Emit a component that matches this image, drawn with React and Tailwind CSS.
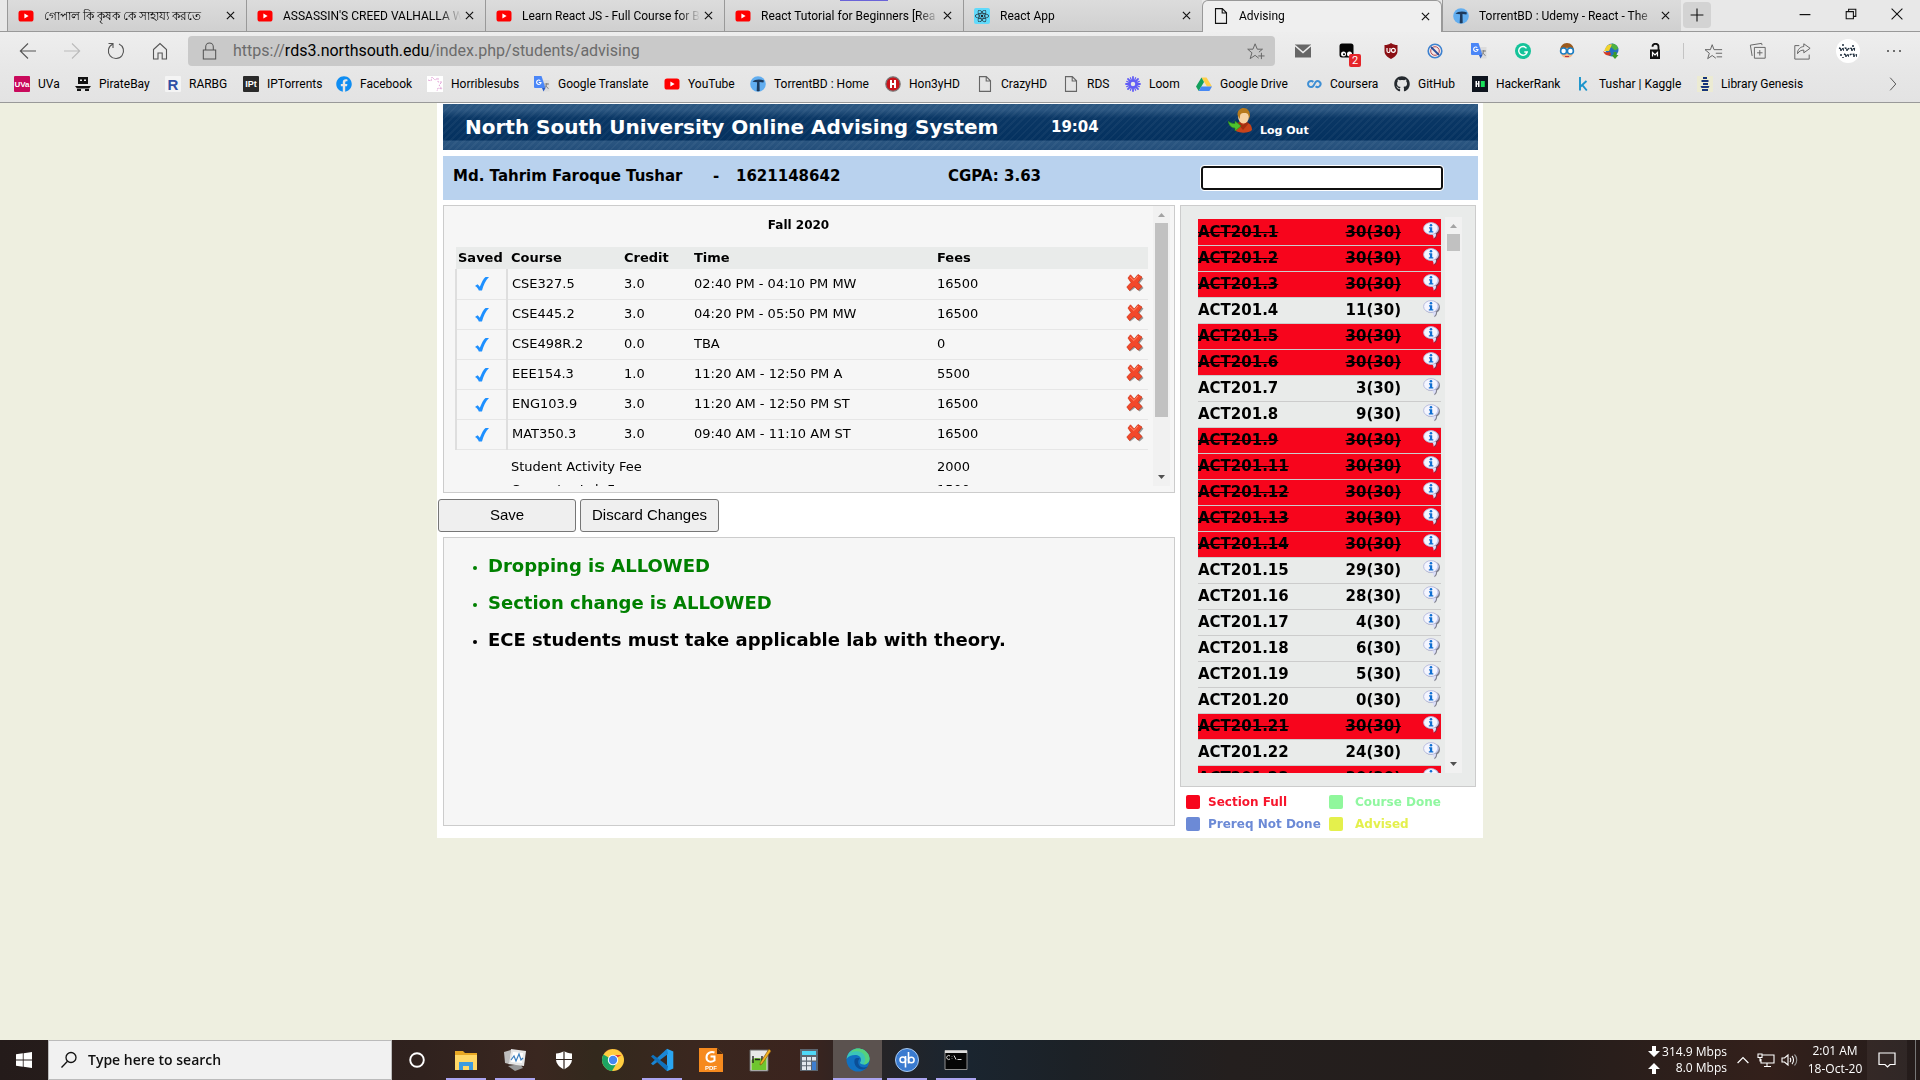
import React from "react";
import { FaGithub, FaReact, FaFacebook } from "react-icons/fa";

/* ---------- small site icons ---------- */

const YouTube = () => (
  <svg viewBox="0 0 16 16" className="size-4">
    <rect x="0.5" y="2.5" width="15" height="11" rx="2.6" fill="#f00" />
    <path d="M6.4 5.6 10.6 8l-4.2 2.4z" fill="#fff" />
  </svg>
);

const ReactIcon = () => (
  <span className="grid size-4 place-items-center rounded-[2px] bg-[#61dafb] text-[#20232a]">
    <FaReact className="size-3.5" />
  </span>
);

const PageIcon = ({ dark }) => (
  <svg viewBox="0 0 16 16" className="size-4" fill="none" stroke={dark ? "#111" : "#666"} strokeWidth="1.1">
    <path d="M2.5.6h6.8l4.2 4.2v10.6h-11z M9.2.8v4.2h4.2" />
  </svg>
);

const Torrent = () => (
  <svg viewBox="0 0 16 16" className="size-4">
    <circle cx="8" cy="8" r="7.8" fill="#62aef0" />
    <path d="M2.5 5.8C4.500 3.300 10.500 3 14 4.600l-.6 1.800-3.900-.3.2 8.800c-1.500.4-2 .2-3 0l.4-8.600z" fill="#1d3a5c" />
  </svg>
);

const Square = ({ bg, color, children, size = 8 }) => (
  <svg viewBox="0 0 16 16" className="size-4">
    <rect width="16" height="16" rx="1" fill={bg} />
    <text x="8" y={size > 12 ? 13.5 : 11} fontSize={size} fontWeight="700" fill={color} textAnchor="middle" fontFamily="Liberation Sans, sans-serif">
      {children}
    </text>
  </svg>
);

const Ship = () => (
  <svg viewBox="0 0 16 16" className="size-4">
    <path d="M3 1h10v7H3zM0 10h16l-2 2.500H2zM2 13h4v2H2zM10 13h4v2h-4z" fill="#111" />
    <path d="M5 3.500h2v1.500H5zM9 3.500h2v1.500H9zM3 9h10v.8H3z" fill="#eee" />
  </svg>
);

const Horrible = () => (
  <svg viewBox="0 0 16 16" className="size-4">
    <rect width="16" height="16" fill="#fff" />
    <path d="M1 4l3 1 1-4 3 3 3-2 0 4 4 0-3 3 3 4-4-1-1 3" fill="none" stroke="#e3a6d8" strokeWidth="1" strokeDasharray="2 1" />
  </svg>
);

const Translate = () => (
  <svg viewBox="0 0 16 16" className="size-4">
    <path d="M6 4h9.500v11.500H9z" fill="#dcdcdc" />
    <path d="M0 0h7.500l4 12H1a1 1 0 0 1-1-1z" fill="#4a86f7" />
    <path d="M8 12h3.500L9.500 15.500z" fill="#2a5dc8" />
    <path d="M6.300 4.600A2.200 2.200 0 1 0 7 6.500H4.800" fill="none" stroke="#fff" strokeWidth="1.100" />
    <path d="M10.500 8h4.500M12.800 7v1c-.3 2-1.300 3-2.300 4M11.500 9.500c.6 1.200 1.600 2.200 3 3" fill="none" stroke="#777" strokeWidth=".9" />
  </svg>
);

const Hon3y = () => (
  <svg viewBox="0 0 16 16" className="size-4">
    <circle cx="8" cy="8" r="7.200" fill="#c8141b" stroke="#777" strokeWidth="1.200" />
    <path d="M5 4h2v3h2V4h2v8H9V9H7v3H5z" fill="#fff" />
  </svg>
);

const Loom = () => (
  <svg viewBox="0 0 16 16" className="size-4" stroke="#625df5" strokeWidth="1.800" strokeLinecap="round" fill="none">
    <path d="M8 1v3.500M8 11.500V15M1 8h3.500M11.500 8H15M3 3l2.600 2.600M10.400 10.400 13 13M13 3l-2.600 2.600M5.600 10.400 3 13" />
    <circle cx="8" cy="8" r="3.400" strokeWidth="2.200" />
    <path d="M5.400 1.700l1.200 3M9.400 11.300l1.200 3M10.600 1.700l-1.200 3M6.600 11.300l-1.200 3M1.700 5.400l3 1.200M11.300 9.400l3 1.200M1.700 10.600l3-1.200M11.300 6.600l3-1.200" strokeWidth="1.200" />
  </svg>
);

const Drive = () => (
  <svg viewBox="0 0 16 16" className="size-4">
    <path d="M5.500 1.500h5L16 10.500h-5z" fill="#ffcf48" />
    <path d="M5.500 1.500 8 6 2.700 15 0 10.500z" fill="#12a05c" />
    <path d="M5.300 10.500H16L13.400 15H2.700z" fill="#4688f4" />
  </svg>
);

const Coursera = () => (
  <svg viewBox="0 0 16 16" className="size-4" fill="none" stroke="#3f8fd4" strokeWidth="2">
    <path d="M7.300 6A3 3 0 1 0 7.300 10C8.500 8.500 8.500 7.500 9.600 6a2.900 2.900 0 1 1 0 4.200" />
  </svg>
);

const LibGen = () => (
  <svg viewBox="0 0 16 16" className="size-4">
    <rect width="16" height="16" fill="#ecebd3" />
    <path d="M6 1h4v2H6zM4.500 4h7v2h-7zM6 7h5v2H6zM3.500 10h9l-1 2h-7zM5 13h6v2H5z" fill="#17357c" />
  </svg>
);

/* ---------- browser data ---------- */

const tabs = [
  { icon: <YouTube />, title: "গোপাল কি কৃষক কে সাহায্য করতে" },
  { icon: <YouTube />, title: "ASSASSIN'S CREED VALHALLA W" },
  { icon: <YouTube />, title: "Learn React JS - Full Course for B" },
  { icon: <YouTube />, title: "React Tutorial for Beginners [Rea" },
  { icon: <ReactIcon />, title: "React App" },
  { icon: <PageIcon dark />, title: "Advising", active: true },
  { icon: <Torrent />, title: "TorrentBD : Udemy - React - The" },
];

const bookmarks = [
  { label: "UVa", w: "w-[61px]", icon: <Square bg="#c90a5c" color="#fff" size={8}>UVa</Square> },
  { label: "PirateBay", w: "w-[90px]", icon: <Ship /> },
  { label: "RARBG", w: "w-[78px]", icon: <Square bg="#f4f4f4" color="#2f4fa5" size={15}>R</Square> },
  { label: "IPTorrents", w: "w-[93px]", icon: <Square bg="#2a2a2a" color="#fff" size={9}>IPt</Square> },
  { label: "Facebook", w: "w-[91px]", icon: <FaFacebook className="size-4 text-[#0f8df2]" /> },
  { label: "Horriblesubs", w: "w-[107px]", icon: <Horrible /> },
  { label: "Google Translate", w: "w-[130px]", icon: <Translate /> },
  { label: "YouTube", w: "w-[86px]", icon: <YouTube /> },
  { label: "TorrentBD : Home", w: "w-[135px]", icon: <Torrent /> },
  { label: "Hon3yHD", w: "w-[92px]", icon: <Hon3y /> },
  { label: "CrazyHD", w: "w-[86px]", icon: <PageIcon /> },
  { label: "RDS", w: "w-[62px]", icon: <PageIcon /> },
  { label: "Loom", w: "w-[71px]", icon: <Loom /> },
  { label: "Google Drive", w: "w-[110px]", icon: <Drive /> },
  { label: "Coursera", w: "w-[88px]", icon: <Coursera /> },
  { label: "GitHub", w: "w-[78px]", icon: <FaGithub className="size-4 text-[#24292e]" /> },
  {
    label: "HackerRank",
    w: "w-[103px]",
    icon: (
      <svg viewBox="0 0 16 16" className="size-4">
        <rect width="16" height="16" fill="#0e141e" />
        <path d="M3.500 5h1.500v2.200h1V5h1.500v6H6V8.600H5V11H3.500z" fill="#fff" />
        <rect x="8.800" y="5" width="4" height="6" fill="#1ae05b" />
      </svg>
    ),
  },
  {
    label: "Tushar | Kaggle",
    w: "w-[122px]",
    icon: (
      <svg viewBox="0 0 16 16" className="size-4" fill="none" stroke="#1a94cc" strokeWidth="1.900">
        <path d="M5 1v13.500M11.500 5 5.500 10.500M7.200 8.800l4.600 5.700" />
      </svg>
    ),
  },
  { label: "Library Genesis", w: "w-[106px]", icon: <LibGen /> },
];

/* ---------- browser chrome ---------- */

function Close({ className }) {
  return (
    <svg viewBox="0 0 10 10" className={className} stroke="#111" strokeWidth="1.300">
      <path d="M1 1l8 8M9 1l-8 8" />
    </svg>
  );
}

function Tab({ icon, title, active }) {
  return (
    <div
      className={
        active
          ? "flex h-8 min-w-0 flex-1 items-center rounded-t-md border border-b-0 border-[#999] bg-[#efefef] pb-px pl-2.5 pr-2"
          : "flex h-8 min-w-0 flex-1 items-center border-b border-l border-b-[#999] border-l-[#999] bg-linear-to-b from-[#dcdcdc] to-[#d0d0d0] pl-2.5 pr-2"
      }
    >
      <button type="button" className="flex h-full min-w-0 flex-1 items-center text-left">
        <span className="shrink-0">{icon}</span>
        <span className="ml-2.5 flex-1 overflow-hidden whitespace-nowrap mask-r-from-88% mask-r-to-100%">{title}</span>
      </button>
      <button type="button" aria-label={`Close ${title}`} className="grid size-4 shrink-0 place-items-center">
        <Close className="size-[9px]" />
      </button>
    </div>
  );
}

const ToolButton = ({ label, w = "w-11", children }) => (
  <button type="button" aria-label={label} className={`relative grid h-8 shrink-0 place-items-center ${w}`}>
    {children}
  </button>
);

const Line = ({ children, color = "#555", className = "size-5" }) => (
  <svg viewBox="0 0 20 20" className={className} fill="none" stroke={color} strokeWidth="1.100">
    {children}
  </svg>
);

function Browser() {
  return (
    <header className="shrink-0 border-b border-[#999] bg-[#e8e8e8] font-['Roboto','Noto_Sans',sans-serif] text-xs text-black">
      <div className="relative flex h-8 border-b border-[#999] pl-[7px]">
        <span className="absolute left-[840px] top-0 h-px w-12 bg-[#6a63d8]" />
        <div className="-mb-px flex min-w-0 max-w-[1674px] flex-1">
          {tabs.map((t) => (
            <Tab key={t.title} {...t} />
          ))}
        </div>
        <button type="button" aria-label="New tab" className="ml-0.5 mt-0.5 grid h-[26px] w-7 place-items-center rounded-sm bg-[#d3d3d3]">
          <Line color="#111" className="size-4"><path d="M10 2v16M2 10h16" strokeWidth="1.400" /></Line>
        </button>
        <div className="ml-auto flex">
          <button type="button" aria-label="Minimize" className="grid h-7 w-[46px] place-items-center">
            <Line color="#111" className="size-3"><path d="M1 11h18" strokeWidth="2" /></Line>
          </button>
          <button type="button" aria-label="Restore" className="grid h-7 w-[46px] place-items-center">
            <Line color="#111" className="size-3"><path d="M2 6h12v12H2zM6 6V2h12v12h-4" strokeWidth="1.800" /></Line>
          </button>
          <button type="button" aria-label="Close window" className="grid h-7 w-[46px] place-items-center">
            <Line color="#111" className="size-3"><path d="M1 1l18 18M19 1 1 19" strokeWidth="1.800" /></Line>
          </button>
        </div>
      </div>

      <div className="flex h-[38px] items-center bg-linear-to-b from-[#eeeeee] to-[#e7e7e7] pl-1.5 pr-1">
        <ToolButton label="Back"><Line color="#555"><path d="M18 10H2M10 2.500 2.300 10l7.700 7.500" /></Line></ToolButton>
        <ToolButton label="Forward"><Line color="#bbb"><path d="M2 10h16M10 2.500l7.700 7.500-7.700 7.500" /></Line></ToolButton>
        <ToolButton label="Reload">
          <Line color="#555"><path d="M6.500 3.200a7.600 7.600 0 1 0 6.500-.2M2.500 2.500h4.500V7" /></Line>
        </ToolButton>
        <ToolButton label="Home">
          <Line color="#555"><path d="M3.500 8.500 10 2.500l6.500 6v9.500h-4.300v-6H8v6H3.500z" /></Line>
        </ToolButton>
        <label className="ml-1.5 mr-1.5 flex h-[30px] min-w-0 flex-1 items-center rounded-sm bg-[#c9c9c9] pl-3 pr-2.5">
          <Line color="#555" className="size-[19px] shrink-0"><path d="M3.500 8.500h13V18h-13zM6 8.500V5a4 4 0 0 1 8 0v3.500" /></Line>
          <span className="ml-3.5 flex-1 text-base text-[#6b6b6b]">
            https://<span className="text-black">rds3.northsouth.edu</span>/index.php/students/advising
          </span>
          <Line color="#666" className="size-[18px]">
            <path d="M13 18 9 14.800 3.500 18.500l2-6.500L.8 8h5.800L9 2l2.400 6h5.800l-4 3.300M16 12v7M12.500 15.500h7" />
          </Line>
        </label>
        <ToolButton label="Mail">
          <svg viewBox="0 0 16 16" className="size-4"><path d="M0 1.500h16v13H0z" fill="#666" /><path d="M0 2.500 8 9.500l8-7" fill="none" stroke="#eee" strokeWidth="1.600" /></svg>
        </ToolButton>
        <ToolButton label="Tampermonkey">
          <svg viewBox="0 0 16 16" className="size-4"><rect x=".5" y=".5" width="14" height="14" rx="2.500" fill="#050505" /><circle cx="4.500" cy="11" r="2.500" fill="#fff" /><circle cx="10.500" cy="11" r="2.500" fill="#fff" /><circle cx="5" cy="11.300" r="1" /></svg>
          <span className="absolute bottom-0 left-6 rounded-xs bg-[#e5252a] px-[3px] text-[11px] leading-[13px] text-white">2</span>
        </ToolButton>
        <ToolButton label="uBlock Origin">
          <svg viewBox="0 0 16 16" className="size-4"><path d="M8 0c2 1.500 4 2 6.500 2v6c0 4-3 6-6.500 8-3.500-2-6.500-4-6.500-8V2C4 2 6 1.500 8 0z" fill="#8b0f14" /><path d="M4 5v3a1.500 1.500 0 0 0 3 0V5" fill="none" stroke="#fff" strokeWidth="1.200" /><circle cx="10.300" cy="7.300" r="2" fill="none" stroke="#fff" strokeWidth="1.200" /></svg>
        </ToolButton>
        <ToolButton label="Blocker">
          <svg viewBox="0 0 16 16" className="size-4"><circle cx="8" cy="8" r="6.800" fill="#f6e9e7" stroke="#3d82d0" strokeWidth="1.600" /><circle cx="8" cy="8" r="4.300" fill="none" stroke="#b24c54" strokeWidth="1" /><path d="M4 4l8 8" stroke="#274c9b" strokeWidth="1.800" /></svg>
        </ToolButton>
        <ToolButton label="Google Translate"><Translate /></ToolButton>
        <ToolButton label="Grammarly">
          <svg viewBox="0 0 16 16" className="size-4"><circle cx="8" cy="8" r="8" fill="#15c39a" /><path d="M11.500 5.300A4.300 4.300 0 1 0 12.200 9H9.300" fill="none" stroke="#fff" strokeWidth="1.400" /></svg>
        </ToolButton>
        <ToolButton label="Reader">
          <svg viewBox="0 0 16 16" className="size-4"><path d="M1 8c0-5 3-8 7-8s7 3 7 8z" fill="#9c5a1d" /><path d="M2.500 7c3-3 8-3 11 0v5c-2 4-9 4-11 0z" fill="#f4b886" /><circle cx="4.600" cy="8" r="3" fill="#fff" stroke="#1d7fc4" strokeWidth="1.600" /><circle cx="11.400" cy="8" r="3" fill="#fff" stroke="#1d7fc4" strokeWidth="1.600" /><path d="M6 13.500h4" stroke="#b34" /></svg>
        </ToolButton>
        <ToolButton label="Download Manager">
          <svg viewBox="0 0 16 16" className="size-4"><circle cx="9" cy="7" r="6.500" fill="#246fc0" /><path d="M9 .5a7 7 0 0 1 6.300 5L12 7.500 8 4z" fill="#4fb23f" /><path d="M2.500 5C4 1.500 7 .5 9 1.500L6 8 1 8z" fill="#f1d22c" /><path d="M0 8c3 2 5 1.500 7 .5l1 3.500C5 13.500 1.500 12 0 8z" fill="#d63a21" /><path d="M10.500 9v3H8.500l3.500 4 3.500-4h-2V9z" fill="#3a9a2a" /></svg>
        </ToolButton>
        <ToolButton label="Unlock">
          <svg viewBox="0 0 16 16" className="size-4"><path d="M5.500 3.800a3 3 0 0 1 6 0V7" fill="none" stroke="#111" strokeWidth="1.800" /><rect x="3" y="6.500" width="10" height="9.500" fill="#111" /><path d="M5.500 13.500v-4L8 12l2.500-2.500v4" fill="none" stroke="#fff" strokeWidth="1.200" /></svg>
        </ToolButton>
        <span className="ml-1.5 mr-2 h-4 w-px bg-[#c4c4c4]" />
        <ToolButton label="Favorites">
          <Line color="#666" className="size-[18px]"><path d="M12 18 8 15l-5 3.500 1.800-6L0 8.500h6L8 3l2 5.500h9M12 12.500h7M13 16.500h6" /></Line>
        </ToolButton>
        <ToolButton label="Collections">
          <Line color="#666" className="size-[18px]"><path d="M6 6h12v12H6zM12 9v6M9 12h6M3.500 15.500 1.500 3.500 14 1.500l.5 2" /></Line>
        </ToolButton>
        <ToolButton label="Share">
          <Line color="#666" className="size-[18px]"><path d="M7 4H2v15h16v-5M12 2l7 5-7 5V9c-3 0-5 1-7 4 0-5 3-7.500 7-8z" /></Line>
        </ToolButton>
        <ToolButton label="Profile" w="w-12">
          <svg viewBox="0 0 24 24" className="size-6">
            <circle cx="12" cy="12" r="12" fill="#fff" />
            <path d="M3 9l3 1 3-1 3 1 2-1 3 1 3-1M4 11h4M10 11h3M15 11h4M8 15l2 1h3l3-1 5 1M9 17h4M17 17h4" stroke="#1c2b3a" strokeWidth="1.400" fill="none" strokeDasharray="2 1" />
            <path d="M7 5v2M5 17v-2M17 6v2M7 19v-1" stroke="#123" strokeWidth="1.400" />
          </svg>
        </ToolButton>
        <ToolButton label="Menu">
          <svg viewBox="0 0 16 16" className="size-4" fill="#444"><circle cx="2" cy="8" r="1" /><circle cx="8" cy="8" r="1" /><circle cx="14" cy="8" r="1" /></svg>
        </ToolButton>
      </div>

      <nav className="flex h-8 items-center bg-linear-to-b from-[#e7e7e7] to-[#e3e3e3] pb-1 pl-3.5 pr-5">
        {bookmarks.map((b) => (
          <a key={b.label} href="#" className={`flex min-w-0 items-center gap-2 whitespace-nowrap ${b.w}`}>
            <span className="shrink-0">{b.icon}</span>
            {b.label}
          </a>
        ))}
        <button type="button" aria-label="More bookmarks" className="ml-auto">
          <Line color="#555" className="size-3.5"><path d="M6 1l8 9-8 9" strokeWidth="1.400" /></Line>
        </button>
      </nav>
    </header>
  );
}

/* ---------- advising page ---------- */

const courses = [
  ["CSE327.5", "3.0", "02:40 PM - 04:10 PM MW", "16500"],
  ["CSE445.2", "3.0", "04:20 PM - 05:50 PM MW", "16500"],
  ["CSE498R.2", "0.0", "TBA", "0"],
  ["EEE154.3", "1.0", "11:20 AM - 12:50 PM A", "5500"],
  ["ENG103.9", "3.0", "11:20 AM - 12:50 PM ST", "16500"],
  ["MAT350.3", "3.0", "09:40 AM - 11:10 AM ST", "16500"],
];

const fees = [
  ["Student Activity Fee", "2000"],
  ["Computer Lab Fee", "1500"],
];

const sections = [
  [1, 30], [2, 30], [3, 30], [4, 11], [5, 30], [6, 30], [7, 3], [8, 9], [9, 30], [11, 30], [12, 30],
  [13, 30], [14, 30], [15, 29], [16, 28], [17, 4], [18, 6], [19, 5], [20, 0], [21, 30], [22, 24], [23, 30],
];

const Tick = () => (
  <svg viewBox="0 0 14 14" className="inline-block size-3.5" role="img" aria-label="Saved">
    <path d="M0 9 2.500 7.200c1 .6 1.700 1.600 2.300 2.600C6.500 5.500 8.500 1.500 10.500 0H14C10.500 3.500 8.500 8 7 13.500H3.800C3 11.500 2 10 0 9z" fill="#1e90ff" />
  </svg>
);

const Cross = () => (
  <svg viewBox="0 0 18 18" className="size-[18px]">
    <path d="M5 3l4 3.500L13 2l4.500 2.500-4 5 4 4.500-4 3.500-4-4-5.500 4L2 14l5-4.500L3 5z" fill="#555" opacity=".6" />
    <path d="M4.500.8 8.200 5 12 .5 16 3l-4 5.500 4 4-4 3.700-3.800-4L3.500 16.500.8 13l4.200-4.500L2 4z" fill="#f4482a" stroke="#c93114" strokeWidth=".7" strokeLinejoin="round" />
    <path d="M4 3l4 3.500L12 2" fill="none" stroke="#ff8a68" strokeWidth="1" />
  </svg>
);

const Info = () => (
  <svg viewBox="0 0 18 18" className="size-[18px]">
    <path d="M9.500 1.500c5 0 7.500 2.500 7.500 6 0 2.500-1.500 4.500-3 5 .3 1.700-.5 3.700-2.700 4.700.2-1.500 0-3-1.300-4.200C7 13 3 12 2 9z" fill="#4c4c60" opacity=".65" />
    <path d="M8.800 12.200c1.300.8 2 2.300 1.700 4.300 1.800-1 2.900-2.800 2.400-5z" fill="#dcdffa" />
    <ellipse cx="8" cy="6.500" rx="7.400" ry="5.900" fill="#f4f5ff" stroke="#b3b8da" strokeWidth=".9" />
    <path d="M13 3c2 2 2 5-1.500 8.200 3-1 4-3 3.900-4.900C15.300 5 14.500 3.700 13 3z" fill="#c5caf0" />
    <circle cx="8" cy="3.200" r="1.300" fill="#0f6fd2" />
    <path d="M6 5.200h3.200v4h1.100v1.300H5.800V9.200h1.100V6.400H6z" fill="#0f6fd2" />
  </svg>
);

function Scrollbar({ thumb }) {
  return (
    <div aria-hidden="true" className="flex w-[17px] shrink-0 flex-col items-center bg-[#f1f1f1]">
      <svg viewBox="0 0 17 17" className="size-[17px] shrink-0"><path d="M5 11h7L8.500 7z" fill="#a3a3a3" /></svg>
      <span className={`w-[13px] bg-[#c1c1c1] ${thumb}`} />
      <svg viewBox="0 0 17 17" className="mt-auto size-[17px] shrink-0"><path d="M5 6h7l-3.500 4z" fill="#505050" /></svg>
    </div>
  );
}

function Schedule() {
  return (
    <section className="ml-1.5 flex h-72 border border-[#ccc] bg-[#f6f6f6] pb-1.5 pr-1">
      <div className="min-w-0 flex-1 overflow-hidden pl-[11px] pr-[5px]">
        <h2 className="flex h-[41px] items-center justify-center pb-1 pr-1.5 text-xs font-bold">Fall 2020</h2>
        <table className="w-full table-fixed border-collapse text-left text-[13px] leading-4">
          <colgroup>
            <col className="w-[51px]" />
            <col className="w-[113px]" />
            <col className="w-[70px]" />
            <col className="w-[243px]" />
            <col />
            <col className="w-8" />
          </colgroup>
          <thead>
            <tr className="h-[22px] bg-[#e9ebea]">
              <th className="pl-0.5">Saved</th>
              <th className="pl-1">Course</th>
              <th className="pl-1">Credit</th>
              <th className="pl-1">Time</th>
              <th className="pl-1">Fees</th>
              <th aria-label="Remove" />
            </tr>
          </thead>
          <tbody>
            {courses.map(([code, credit, time, fee]) => (
              <tr key={code} className="h-[30px] border-b border-[#e6e6e6]">
                <td className="border-x-2 border-[#dedede] text-center"><Tick /></td>
                <td className="pl-1">{code}</td>
                <td className="pl-1">{credit}</td>
                <td className="pl-1">{time}</td>
                <td className="pl-1">{fee}</td>
                <td>
                  <button type="button" aria-label={`Remove ${code}`} className="mb-0.5 ml-2.5 block"><Cross /></button>
                </td>
              </tr>
            ))}
          </tbody>
          <tbody>
            <tr className="h-1.5"><td colSpan={6} /></tr>
            {fees.map(([label, fee]) => (
              <tr key={label} className="h-[23px]">
                <td />
                <td colSpan={3} className="pl-1">{label}</td>
                <td className="pl-1">{fee}</td>
                <td />
              </tr>
            ))}
          </tbody>
        </table>
      </div>
      <Scrollbar thumb="h-[194px]" />
    </section>
  );
}

function Sections() {
  return (
    <section className="mr-0.5 flex h-[582px] border border-[#ccc] bg-[#e9ebea] pb-[13px] pl-[17px] pr-[13px] pt-[11px]">
      <div className="mr-1 min-w-0 flex-1 overflow-hidden pt-0.5">
        <table className="w-full table-fixed border-collapse text-[15px] font-bold leading-5">
          <colgroup>
            <col />
            <col className="w-20" />
            <col className="w-10" />
          </colgroup>
          <tbody>
            {sections.map(([n, taken]) => (
              <tr key={n} className={taken === 30 ? "h-[26px] border-b border-[#ccc] bg-[#f7051c]" : "h-[26px] border-b border-[#ccc]"}>
                <td className={taken === 30 ? "line-through" : ""}>ACT201.{n}</td>
                <td className={taken === 30 ? "text-right line-through" : "text-right"}>{taken}(30)</td>
                <td>
                  <button type="button" aria-label={`Details of ACT201.${n}`} className="mb-0.5 ml-[22px] block"><Info /></button>
                </td>
              </tr>
            ))}
          </tbody>
        </table>
      </div>
      <Scrollbar thumb="h-[17px]" />
    </section>
  );
}

const LegendItem = ({ swatch, text, label }) => (
  <li className={`flex items-center gap-2 whitespace-nowrap text-xs leading-4 font-bold ${text}`}>
    <span className={`size-3.5 shrink-0 rounded-xs ${swatch}`} />
    {label}
  </li>
);

function Advising() {
  return (
    <main className="mx-auto w-full max-w-[1046px] bg-white pb-1.5 pr-[5px] pt-px font-['DejaVu_Sans',Verdana,sans-serif] text-black">
      <header className="ml-1.5 grid h-[46px] grid-cols-[586px_177px_1fr] items-center bg-[repeating-linear-gradient(135deg,rgba(255,255,255,0.04)_0_2px,transparent_2px_5px),linear-gradient(to_bottom,#2c5780_0,#2a5580_6px,#0a3765_14px,#04315f_36px,#2b5681_37px,#234e7a_46px)] pl-[22px] text-white">
        <h1 className="whitespace-nowrap text-xl font-bold">North South University Online Advising System</h1>
        <span className="text-[15px] font-bold">19:04</span>
        <a href="#" className="flex items-end gap-1.5 self-start pt-1 text-[11px] font-bold">
          <svg viewBox="0 0 26 26" className="mb-[3px] size-[26px]">
            <path d="M7 22c0-6 3-8 8-8s9 2 9 8c-3 3.500-14 3.500-17 0z" fill="#c8431a" />
            <path d="M12 14l3 3 3-3 3 1-6 7-6-7z" fill="#a32f10" />
            <ellipse cx="15.500" cy="8.500" rx="5.500" ry="7" fill="#f8d3a2" />
            <path d="M9.500 7c0-5 3-7 6-7 4 0 6.500 3 6.500 8l-1 3c0-4-1-6-4-6s-5 0-5 4l-.5 2z" fill="#b87a1c" />
            <path d="M0 13c2 2 4 2.500 7 2.500V13l6 5-6 5v-3C3 20 1 17 0 13z" fill="#4fc02d" stroke="#2b8a17" strokeWidth=".6" />
          </svg>
          <span className="leading-[13px]">Log Out</span>
        </a>
      </header>

      <div className="ml-1.5 mt-1.5 flex h-11 items-center bg-[#b9d2ee] pl-2.5 pr-[35px] text-[15px] font-bold">
        <div className="flex w-[495px] whitespace-pre pb-1">
          <span className="w-[260px]">Md. Tahrim Faroque Tushar</span>
          <span className="w-[23px]">-</span>
          <span>1621148642</span>
        </div>
        <span className="pb-1">CGPA: 3.63</span>
        <input
          type="text"
          aria-label="Search sections"
          autoFocus
          className="ml-auto h-6 w-[242px] rounded-[3px] border-2 border-[#101010] bg-white px-0.5 text-[13px] font-normal outline-1 outline-white"
        />
      </div>

      <div className="mt-[5px] flex items-start gap-[5px]">
        <div className="min-w-0 flex-1">
          <Schedule />
          <div className="mb-[5px] ml-px mt-1.5 flex gap-1 font-['Liberation_Sans',Arial,sans-serif] text-[15px]">
            <button type="button" className="h-[33px] w-[138px] rounded-[3px] border border-[#767676] bg-[#efefef]">Save</button>
            <button type="button" className="h-[33px] w-[139px] rounded-[3px] border border-[#767676] bg-[#efefef]">Discard Changes</button>
          </div>
          <section className="ml-1.5 h-[289px] border border-[#ccc] bg-[#f6f6f6] pl-[45px] pt-4">
            <ul className="flex list-none flex-col gap-[13px] text-lg font-bold leading-6">
              {[
                ["Dropping is ALLOWED", "text-[#008000]"],
                ["Section change is ALLOWED", "text-[#008000]"],
                ["ECE students must take applicable lab with theory.", "text-black"],
              ].map(([text, color]) => (
                <li key={text} className={`-ml-4 flex items-center gap-[11px] ${color}`}>
                  <span aria-hidden="true" className="mt-1 size-1 shrink-0 rounded-full bg-current" />
                  {text}
                </li>
              ))}
            </ul>
          </section>
        </div>
        <div className="w-[298px] shrink-0">
          <Sections />
          <ul className="mt-[7px] grid grid-cols-[143px_1fr] gap-y-1.5 pl-1.5">
            <LegendItem label="Section Full" swatch="bg-[#f7051c]" text="text-[#f7152c]" />
            <LegendItem label="Course Done" swatch="bg-[#90f79c] mr-1" text="text-[#90f7a0]" />
            <LegendItem label="Prereq Not Done" swatch="bg-[#6c8ad6]" text="text-[#6c8ad6]" />
            <LegendItem label="Advised" swatch="bg-[#e4f04c] mr-1" text="text-[#e4f04c]" />
          </ul>
        </div>
      </div>
    </main>
  );
}

/* ---------- taskbar ---------- */

const apps = [
  {
    label: "Cortana",
    icon: <svg viewBox="0 0 24 24" className="size-6"><circle cx="12" cy="12" r="6.800" fill="none" stroke="#fff" strokeWidth="1.900" /></svg>,
  },
  {
    label: "File Explorer",
    open: true,
    icon: (
      <svg viewBox="0 0 24 24" className="size-6">
        <path d="M1 3h8l2 2h12v17H1z" fill="#e8a824" /><path d="M1 7h22v15H1z" fill="#ffd867" />
        <path d="M5 22v-8h14v8h-4v-4H9v4z" fill="#3c9be0" />
      </svg>
    ),
  },
  {
    label: "System Monitor",
    open: true,
    icon: (
      <svg viewBox="0 0 24 24" className="size-6">
        <path d="M5 18l12-2 3 4-8 3z" fill="#999" /><path d="M8 1l15 2-2 15L5 16z" fill="#e6e6e6" /><path d="M10 4l10 1-1 10-11-1z" fill="#fff" />
        <path d="M8 12l3-4 2 5 3-7 2 6 2-2" fill="none" stroke="#3b7fc0" strokeWidth="1.200" /><path d="M1 4l7-2-2 14-4-1z" fill="#bdbdbd" />
      </svg>
    ),
  },
  {
    label: "Windows Security",
    icon: (
      <svg viewBox="0 0 24 24" className="size-6">
        <path d="M12 3c2 1.500 5 2.500 8 2.500V11c0 5-3.500 8-8 10.500C7.500 19 4 16 4 11V5.500C7 5.500 10 4.500 12 3z" fill="#fff" />
        <path d="M12 3v19M4 11.500h16" stroke="#30251f" strokeWidth="1.200" />
      </svg>
    ),
  },
  {
    label: "Chrome",
    icon: (
      <svg viewBox="0 0 24 24" className="size-6">
        <circle cx="12" cy="12" r="11" fill="#ffcd40" />
        <path d="M12 12 2.500 6.500A11 11 0 0 1 21.500 6.500z M2.500 6.500 12 12V7h9.800A11 11 0 0 0 2.500 6.500z" fill="#e33b2e" />
        <path d="M2.400 6.600A11 11 0 0 0 11 22.950L16 14.500 12 12z" fill="#1da462" />
        <circle cx="12" cy="12" r="5.200" fill="#fff" /><circle cx="12" cy="12" r="4.200" fill="#4688f1" />
      </svg>
    ),
  },
  {
    label: "Visual Studio Code",
    open: true,
    icon: (
      <svg viewBox="0 0 24 24" className="size-6">
        <path d="M17 .8 23.300 3.500v17L17 23.200z" fill="#2aa5f0" />
        <path d="M17 .8 1 15.500l2 1.800L18 6z" fill="#1a86d4" /><path d="M17 23.200 1 8.500l2-1.800L18 18z" fill="#1072bd" />
      </svg>
    ),
  },
  {
    label: "Foxit PDF",
    icon: (
      <svg viewBox="0 0 24 24" className="size-6">
        <path d="M0 0h18l6 6v18H0z" fill="#f68a1e" /><path d="M18 0v6h6z" fill="#4b2a12" />
        <path d="M15.500 4.500c-4-1.500-8 1-8 5s4 5.500 8 3V8.500h-4" fill="none" stroke="#fff" strokeWidth="2" />
        <text x="12" y="21.500" fontSize="6" fontWeight="700" fill="#fff" textAnchor="middle" fontFamily="Liberation Sans, sans-serif">PDF</text>
      </svg>
    ),
  },
  {
    label: "Notepad++",
    icon: (
      <svg viewBox="0 0 24 24" className="size-6">
        <path d="M2 2h18v21H2z" fill="#e8e8e8" stroke="#666" /><path d="M3.500 12C9 7 14 14 18.500 8v14h-15z" fill="#6fc62e" />
        <path d="M5 8v7M7 11.500h5M14 8v6" stroke="#222" strokeWidth="1.400" /><path d="M21 1l2 2-9 13-2 1 .3-2.500z" fill="#f0b323" stroke="#7b4c10" strokeWidth=".6" />
      </svg>
    ),
  },
  {
    label: "Calculator",
    icon: (
      <svg viewBox="0 0 24 24" className="size-6">
        <path d="M3 1h18v22H3z" fill="#5c6670" /><path d="M5 3h14v4H5z" fill="#4fd8f7" />
        <path d="M5 9h4v3.500H5zM10 9h4v3.500h-4zM5 13.700h4v3.500H5zM10 13.700h4v3.500h-4zM5 18.300h4V22H5zM10 18.300h4V22h-4zM15 9h4v3.500h-4z" fill="#e3e8ee" />
        <path d="M15 13.700h4V22h-4z" fill="#3e7fd0" />
      </svg>
    ),
  },
  {
    label: "Microsoft Edge",
    open: true,
    active: true,
    icon: (
      <svg viewBox="0 0 24 24" className="size-6">
        <circle cx="12" cy="12" r="11.500" fill="#1170c0" />
        <path d="M.6 11C1.500 4 6.500.5 12 .5c6.500 0 11.500 5 11.500 10 0 4-3 6-6 6-2.500 0-3.500-1-3.500-1.700 0-.8 1-1 1-3C15 9 12.500 7 9 7S2 8.500.6 11z" fill="#3cc5b8" />
        <path d="M12 .5c6.500 0 11.500 5 11.500 10 0 4-3 6-6 6 2-2 3-9-2-12-3.500-2-8-1.500-11 .5C6.500 1.500 9.500.5 12 .5z" fill="#5bd46e" opacity=".8" />
        <path d="M8.500 12c-1 5 3 9.500 8 9.500 2 0 4-1 5.200-3-6 2.500-9.500-.5-9.500-4.500 0-1.500.6-2.500 1.600-3.500-2-1-5-.5-5.300 1.500z" fill="#0b4f97" />
      </svg>
    ),
  },
  {
    label: "qBittorrent",
    open: true,
    icon: (
      <svg viewBox="0 0 24 24" className="size-6">
        <circle cx="12" cy="12" r="11.500" fill="#3a7bd0" stroke="#a9c9ef" />
        <path d="M10.500 8v11.500M13.500 4v11.500" stroke="#fff" strokeWidth="1.600" /><circle cx="7.800" cy="11.800" r="2.800" fill="none" stroke="#fff" strokeWidth="1.500" /><circle cx="16.300" cy="12" r="2.800" fill="none" stroke="#fff" strokeWidth="1.500" />
      </svg>
    ),
  },
  {
    label: "Command Prompt",
    open: true,
    icon: (
      <svg viewBox="0 0 24 24" className="size-6">
        <path d="M1 2.500h22v19H1z" fill="#050505" stroke="#8f8f8f" /><path d="M1 2.500h22v2.500H1z" fill="#ddd" />
        <path d="M6 8a2 2 0 1 0 0 3M8 8.500v.5M8 10.500v.5M10 7.500l2 4M13.500 11.500h4" stroke="#ddd" fill="none" strokeWidth="1" />
      </svg>
    ),
  },
];

function Taskbar() {
  return (
    <footer className="flex h-10 shrink-0 items-stretch bg-[linear-gradient(to_right,#241b1a_0%,#30221e_22%,#3a2720_28%,#33291d_31%,#3a271f_36%,#3b241e_42%,#252427_46%,#1a2530_50%,#1c2126_56%,#241f1e_64%,#241d1b_80%,#33201b_92%,#241c1b_100%)] font-['Open_Sans','Noto_Sans',sans-serif] text-xs text-white">
      <button type="button" aria-label="Start" className="grid w-12 place-items-center">
        <svg viewBox="0 0 16 16" className="size-4" fill="#fff"><path d="M0 2.200 6.800 1.300v6.300H0zM7.600 1.200 16 0v7.600H7.600zM0 8.400h6.800v6.300L0 13.800zM7.600 8.400H16V16l-8.400-1.200z" /></svg>
      </button>
      <label className="flex w-[344px] items-center border border-[#bbb] bg-[#f1f1f1] pl-[11px]">
        <svg viewBox="0 0 18 18" className="size-[18px]" fill="none" stroke="#111" strokeWidth="1.300"><circle cx="11" cy="6.500" r="5" /><path d="M7.500 10.200 1.500 16.500" /></svg>
        <input type="text" placeholder="Type here to search" className="ml-2.5 min-w-0 flex-1 bg-transparent text-sm font-semibold outline-none placeholder:text-[#111]" />
      </label>
      {apps.map((a) => (
        <button
          key={a.label}
          type="button"
          aria-label={a.label}
          className={a.active ? "flex w-[49px] flex-col items-center bg-[#5b524f] pt-2" : "flex w-[49px] flex-col items-center pt-2"}
        >
          {a.icon}
          {a.open && <span className={a.active ? "mt-auto h-0.5 w-full bg-[#aba4f0]" : "mt-auto h-0.5 w-10 bg-[#aba4f0]"} />}
        </button>
      ))}
      <div className="ml-auto flex items-center">
        <svg viewBox="0 0 12 32" className="mr-1 h-8 w-3" fill="#fff">
          <path d="M4 2h4v5h4l-6 6-6-6h4zM4 30h4v-5h4l-6-6-6 6h4z" />
        </svg>
        <p className="flex w-[63px] flex-col items-end whitespace-nowrap leading-4">
          <span>314.9 Mbps</span>
          <span>8.0 Mbps</span>
        </p>
        <button type="button" aria-label="Show hidden icons" className="ml-2.5"><Line color="#fff" className="size-3"><path d="M1 15 10 6l9 9" strokeWidth="2" /></Line></button>
        <svg viewBox="0 0 18 16" className="ml-2 h-4 w-[18px]" fill="none" stroke="#fff" strokeWidth="1.100"><path d="M5 3h12v8H4V7M10 11v3M7 14.500h7M1 2h4v3.500H1zM3 5.500V9h1" /></svg>
        <svg viewBox="0 0 18 16" className="ml-1.5 h-4 w-[18px]" fill="none" stroke="#fff" strokeWidth="1.100"><path d="M1 6v4h2.500L7 13V3L3.500 6zM9 6c1 1 1 3 0 4M11 4c2 2 2 6 0 8" /><path d="M13.500 2.500c3 3 3 8 0 11" stroke="#999" /></svg>
        <div className="ml-1 w-16 whitespace-nowrap text-center leading-[18px]">2:01 AM<br />18-Oct-20</div>
      </div>
      <button type="button" aria-label="Notifications" className="grid w-10 place-items-center bg-white/5">
        <svg viewBox="0 0 18 18" className="size-[18px]" fill="none" stroke="#fff" strokeWidth="1.200"><path d="M1 2h16v11.500h-5L9.500 16 7 13.500H1z" /></svg>
      </button>
      <span className="ml-2 mr-1 w-px bg-[#777]" />
    </footer>
  );
}

export default function App() {
  return (
    <div className="flex min-h-screen flex-col bg-[#eeefe0]">
      <Browser />
      <div className="flex-1">
        <Advising />
      </div>
      <Taskbar />
    </div>
  );
}
